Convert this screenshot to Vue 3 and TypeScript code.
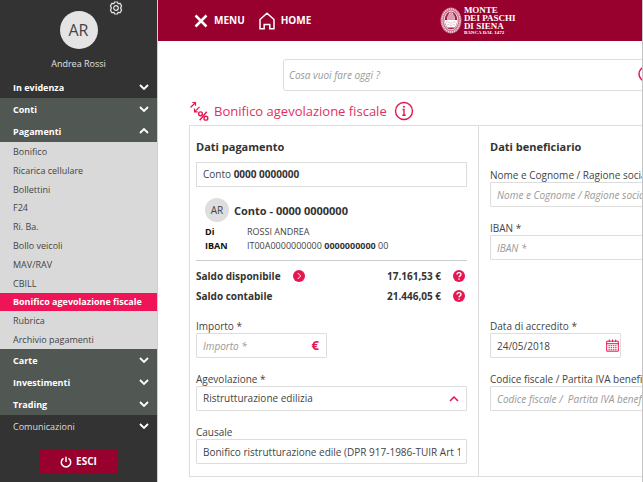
<script setup lang="ts">
import { ref } from 'vue'

interface MenuSection {
  label: string
  tone: 'dark' | 'grey'
  light?: boolean
  items?: string[]
}

const sections: MenuSection[] = [
  { label: 'In evidenza', tone: 'dark' },
  { label: 'Conti', tone: 'grey' },
  {
    label: 'Pagamenti',
    tone: 'grey',
    items: [
      'Bonifico',
      'Ricarica cellulare',
      'Bollettini',
      'F24',
      'Ri. Ba.',
      'Bollo veicoli',
      'MAV/RAV',
      'CBILL',
      'Bonifico agevolazione fiscale',
      'Rubrica',
      'Archivio pagamenti',
    ],
  },
  { label: 'Carte', tone: 'grey' },
  { label: 'Investimenti', tone: 'grey' },
  { label: 'Trading', tone: 'grey' },
  { label: 'Comunicazioni', tone: 'dark', light: true },
]

const openSection = ref('Pagamenti')
const activeItem = ref('Bonifico agevolazione fiscale')

const balances = [
  { label: 'Saldo disponibile', amount: '17.161,53 €', more: true },
  { label: 'Saldo contabile', amount: '21.446,05 €', more: false },
]

const search = ref('')
const amount = ref('')
const relief = ref('Ristrutturazione edilizia')
const reason = ref('Bonifico ristrutturazione edile (DPR 917-1986-TUIR Art 16-BIS)')
const payee = ref('')
const iban = ref('')
const creditDate = ref('24/05/2018')
const taxCode = ref('')

function toggle(label: string) {
  openSection.value = openSection.value === label ? '' : label
}
</script>

<template>
  <div class="page">
    <aside class="sidebar">
      <div class="profile">
        <button class="settings" type="button" aria-label="Impostazioni">
          <svg viewBox="0 0 14 14" width="14" height="14">
            <path d="M5.600 1h2.800l.7 1.700 2.100-.3 1.400 2.500L11.500 7l1.100 2.100-1.400 2.500-2.100-.3-.7 1.700H5.600l-.7-1.700-2.100.3-1.400-2.500L2.500 7 1.400 4.900l1.400-2.500 2.100.3z" />
            <circle cx="7" cy="7" r="2.300" />
          </svg>
        </button>
        <span class="avatar">AR</span>
        <span class="name">Andrea Rossi</span>
      </div>

      <nav class="menu">
        <div v-for="s in sections" :key="s.label">
          <button
            type="button"
            class="section"
            :class="[s.tone, { light: s.light }]"
            :aria-expanded="openSection === s.label"
            @click="toggle(s.label)"
          >
            <span>{{ s.label }}</span>
            <svg viewBox="0 0 10 6" width="10" height="6" class="chevron">
              <path :d="openSection === s.label ? 'M1 5l4-4 4 4' : 'M1 1l4 4 4-4'" />
            </svg>
          </button>
          <ul v-if="s.items && openSection === s.label" class="items">
            <li v-for="item in s.items" :key="item">
              <a href="#" :class="{ active: item === activeItem }" @click.prevent="activeItem = item">{{ item }}</a>
            </li>
          </ul>
        </div>
      </nav>

      <button class="logout" type="button">
        <svg viewBox="0 0 12 12" width="12" height="12">
          <path d="M3.500 2.300a4.700 4.700 0 1 0 5 0M6 .8v5.200" />
        </svg>
        <span>ESCI</span>
      </button>
    </aside>

    <div class="main">
      <header class="topbar">
        <button class="toplink" type="button">
          <svg viewBox="0 0 14 14" width="14" height="14" class="cross"><path d="M1.500 1.500l11 11M12.500 1.500l-11 11" /></svg>
          <span>MENU</span>
        </button>
        <a class="toplink" href="#">
          <svg viewBox="0 0 16 18" width="16" height="18" class="house">
            <path d="M1 7.500L8 1.200l7 6.300v9.300h-4.200v-4.300H5.200v4.300H1z" />
          </svg>
          <span>HOME</span>
        </a>
        <a class="brand" href="#">
          <svg viewBox="0 0 22 27" width="22" height="27">
            <ellipse cx="11" cy="13.500" rx="10.500" ry="13" fill="#c97590" />
            <ellipse cx="11" cy="13.500" rx="9" ry="11.500" fill="none" stroke="#fbeef2" stroke-width="1.400" stroke-dasharray="1 1" />
            <ellipse cx="11" cy="13.500" rx="6.800" ry="9.300" fill="#a51943" stroke="#fff" stroke-width=".8" />
            <path d="M11 4.700c-2.400 1-4 4-4 8h8c0-4-1.600-7-4-8z" fill="#f3d6df" />
            <path d="M11 5v7.500M9 7v5M13 7v5" stroke="#a51943" stroke-width=".6" />
            <path d="M4.800 13h12.400c0 3-1 5.500-2.700 7.500h-7C5.800 18.500 4.800 16 4.800 13z" fill="#fff" />
            <path d="M6 15.500q1.700-1.600 3.300 0t3.400 0 3.300 0M7 18q1.300-1.200 2.700 0t2.600 0 2.700 0" fill="none" stroke="#d48ba3" stroke-width=".5" />
          </svg>
          <span class="brand-text">
            <strong>MONTE</strong>
            <strong>DEI PASCHI</strong>
            <strong>DI SIENA</strong>
            <small>BANCA DAL 1472</small>
          </span>
        </a>
      </header>

      <div class="content">
        <div class="searchbox">
          <input v-model="search" type="search" aria-label="Cerca" placeholder="Cosa vuoi fare oggi ?" />
          <svg viewBox="0 0 18 18" width="18" height="18"><circle cx="8" cy="8" r="7" /><path d="M13 13l4 4" /></svg>
        </div>

        <div class="title">
          <svg viewBox="0 0 20 20" width="20" height="20" class="transfer">
            <path d="M1.500 6.500L6.500 1.500M3.300 1.500h3.200v3.200" />
            <path d="M10.500 5.800L5.500 10.800M8.700 10.800H5.500V7.600" />
            <g class="percent">
              <path d="M17.700 10.800l-7 8.400" />
              <circle cx="11.500" cy="12.800" r="1.900" />
              <circle cx="16.900" cy="17.200" r="1.900" />
            </g>
          </svg>
          <h1>Bonifico agevolazione fiscale</h1>
          <button type="button" class="info" aria-label="Informazioni">
            <svg viewBox="0 0 20 20" width="20" height="20">
              <circle cx="10" cy="10" r="8.500" />
              <path d="M8.500 8.500H10v5.500M8.300 14.200h3.400" />
              <circle cx="10" cy="5.800" r="1" class="dot" />
            </svg>
          </button>
        </div>

        <form class="card" @submit.prevent>
          <section class="panel">
            <h2>Dati pagamento</h2>
            <div class="account">Conto <b>0000 0000000</b></div>
            <div class="holder">
              <div class="holder-head">
                <span class="badge">AR</span>
                <h3>Conto - 0000 0000000</h3>
              </div>
              <dl>
                <dt>Di</dt>
                <dd>ROSSI ANDREA</dd>
                <dt>IBAN</dt>
                <dd>IT00A0000000000 <b>0000000000</b> 00</dd>
              </dl>
            </div>
            <div class="balances">
              <div v-for="b in balances" :key="b.label" class="balance">
                <span>{{ b.label }}</span>
                <button v-if="b.more" type="button" class="round" aria-label="Dettaglio">
                  <svg viewBox="0 0 12 12" width="12" height="12"><circle cx="6" cy="6" r="6" /><path d="M4.700 3l3 3-3 3" /></svg>
                </button>
                <span class="amount">{{ b.amount }}</span>
                <button type="button" class="round" aria-label="Aiuto">
                  <svg viewBox="0 0 12 12" width="12" height="12">
                    <circle cx="6" cy="6" r="6" />
                    <path d="M4 4.600c0-2.600 4-2.600 4 0C8 6 6 5.900 6 7.300M6 8.600v1.200" class="mark" />
                  </svg>
                </button>
              </div>
            </div>
            <div class="fields">
              <div class="field short">
                <label for="amount">Importo *</label>
                <div class="control">
                  <input id="amount" v-model="amount" type="text" placeholder="Importo *" />
                  <span class="adorn euro">€</span>
                </div>
              </div>
              <div class="field">
                <label for="relief">Agevolazione *</label>
                <div class="control">
                  <select id="relief" v-model="relief">
                    <option>Ristrutturazione edilizia</option>
                    <option>Risparmio energetico</option>
                  </select>
                  <svg viewBox="0 0 10 6" width="10" height="6" class="adorn caret"><path d="M1 5l4-4 4 4" /></svg>
                </div>
              </div>
              <div class="field">
                <label for="reason">Causale</label>
                <div class="control"><input id="reason" v-model="reason" type="text" /></div>
              </div>
            </div>
          </section>

          <section class="panel">
            <h2>Dati beneficiario</h2>
            <div class="fields">
              <div class="field">
                <label for="payee">Nome e Cognome / Ragione sociale *</label>
                <div class="control">
                  <input id="payee" v-model="payee" type="text" placeholder="Nome e Cognome / Ragione sociale *" />
                </div>
              </div>
              <div class="field">
                <label for="iban">IBAN *</label>
                <div class="control"><input id="iban" v-model="iban" type="text" placeholder="IBAN *" /></div>
              </div>
            </div>
            <div class="fields second">
              <div class="field short">
                <label for="date">Data di accredito *</label>
                <div class="control">
                  <input id="date" v-model="creditDate" type="text" />
                  <svg viewBox="0 0 13 13" width="13" height="13" class="adorn calendar">
                    <path d="M.7 2.200h11.600v10H.7zM.7 4.700h11.600M3.300.5v2.500M6.500.5v2.500M9.700.5v2.500" />
                    <path d="M2.500 6.700h8M2.500 8.700h8M2.500 10.700h8" stroke-dasharray="1.400 .8" />
                  </svg>
                </div>
              </div>
              <div class="field">
                <label for="tax">Codice fiscale / Partita IVA beneficiario</label>
                <div class="control">
                  <input id="tax" v-model="taxCode" type="text" placeholder="Codice fiscale /  Partita IVA beneficiario" />
                </div>
              </div>
            </div>
          </section>
        </form>
      </div>
    </div>
  </div>
</template>

<style>
body {
  background: #fff;
  overflow-x: hidden;
}
</style>

<style scoped>
* {
  box-sizing: border-box;
}

.page {
  display: flex;
  min-height: 100vh;
  overflow: hidden;
  border-right: 1px solid #c4c4c4;
  font-family: 'Open Sans', 'Noto Sans', sans-serif;
  font-size: 10px;
  line-height: 15px;
  color: #444;
}

button,
input,
select {
  font: inherit;
  color: inherit;
}

button {
  padding: 0;
  border: 0;
  background: none;
}

svg {
  display: block;
  flex: none;
  fill: none;
}

h1,
h2,
h3,
ul,
dl,
dd {
  margin: 0;
  padding: 0;
}

a {
  color: inherit;
  text-decoration: none;
}

/* Sidebar */
.sidebar {
  flex: none;
  width: 158px;
  padding-bottom: 9px;
  border-right: 1px solid #d0d0d0;
  background: #333;
  font-size: 9px;
}

.profile {
  position: relative;
  display: flex;
  flex-direction: column;
  align-items: center;
  gap: 7px;
  padding: 11px 0 5px;
}

.settings {
  position: absolute;
  top: 1px;
  right: 34px;
}

.settings svg {
  stroke: #e6e6e6;
  stroke-width: 1.2;
}

.avatar {
  display: grid;
  place-items: center;
  width: 38px;
  height: 38px;
  border-radius: 50%;
  background: #e4e4e4;
  color: #444;
  font-size: 16px;
}

.name {
  color: #e2e2e2;
}

.section {
  display: flex;
  align-items: center;
  justify-content: space-between;
  width: 100%;
  height: 22px;
  padding: 0 8px 0 13px;
  color: #fff;
  font-weight: 700;
}

.section.dark {
  background: #333;
}

.section.grey {
  background: #515753;
}

.section.light {
  color: #ddd;
  font-weight: 400;
}

.chevron {
  stroke: #fff;
  stroke-width: 1.8;
}

.items {
  display: grid;
  grid-auto-rows: 1fr;
  min-height: 207px;
  list-style: none;
  background: #d9d9d9;
}

.items a {
  display: flex;
  align-items: center;
  height: 100%;
  padding-left: 13px;
  white-space: nowrap;
}

.items a.active {
  background: #ef1458;
  color: #fff;
  font-weight: 700;
}

.logout {
  display: flex;
  align-items: center;
  justify-content: center;
  gap: 4px;
  width: 78px;
  height: 23px;
  margin: 13px auto 0;
  background: #98002e;
  color: #fff;
  font-size: 10px;
  font-weight: 700;
}

.logout svg {
  stroke: #fff;
  stroke-width: 1.5;
}

/* Top bar */
.main {
  flex: 1;
  min-width: 0;
}

.topbar {
  display: flex;
  align-items: center;
  height: 41px;
  padding-left: 36px;
  background: #98002e;
  color: #fff;
}

.toplink {
  display: flex;
  align-items: center;
  gap: 6px;
  margin-right: 14px;
  font-weight: 700;
}

.cross {
  stroke: #fff;
  stroke-width: 2.5;
}

.house {
  stroke: #fff;
  stroke-width: 1.5;
}

.brand {
  display: flex;
  align-items: center;
  gap: 2px;
  margin: 0 auto;
  padding-right: 12px;
}

.brand-text {
  display: flex;
  flex-direction: column;
  font-family: 'Liberation Serif', serif;
  font-size: 9px;
  line-height: 8px;
}

.brand-text small {
  font-size: 5px;
  font-weight: 700;
  line-height: 6px;
}

/* Content */
.content {
  padding: 18px 0 5px 31px;
}

.searchbox {
  display: flex;
  align-items: center;
  width: 400px;
  height: 32px;
  margin-left: 94px;
  border: 1px solid #ddd;
  border-radius: 3px;
}

.searchbox input {
  width: 354px;
  height: 30px;
  padding: 0 5px;
  border: 0;
  background: none;
  appearance: none;
}

.searchbox svg {
  stroke: #e5174f;
  stroke-width: 1.5;
}

.title {
  display: flex;
  align-items: center;
  gap: 5px;
  height: 34px;
  padding-top: 6px;
  color: #e0305f;
}

.title h1 {
  font-size: 13px;
  font-weight: 400;
  line-height: 18px;
}

.transfer {
  stroke: #e5174f;
  stroke-width: 1.2;
}

.percent {
  stroke-width: 1.4;
}

.info {
  margin-left: 2px;
}

.info svg {
  stroke: #e5174f;
  stroke-width: 1.4;
}

.info .dot {
  fill: #e5174f;
  stroke: none;
}

.card {
  display: grid;
  grid-template-columns: 288px 288px;
  width: 578px;
  border: 1px solid #ddd;
  background: #fff;
}

.panel {
  padding: 12px 11px 12px 6px;
}

.panel + .panel {
  padding-left: 11px;
  border-left: 1px solid #ddd;
}

h2 {
  color: #333;
  font-size: 11px;
  font-weight: 700;
  line-height: 17px;
}

.account {
  height: 25px;
  margin-top: 7px;
  padding: 4px 6px;
  border: 1px solid #ddd;
}

.account b,
dd b {
  color: #333;
}

.holder {
  padding: 11px 0 7px 9px;
}

.holder-head {
  display: flex;
  align-items: center;
  gap: 5px;
}

.badge {
  display: grid;
  place-items: center;
  width: 24px;
  height: 24px;
  border-radius: 50%;
  background: #dedede;
}

h3 {
  color: #333;
  font-size: 11px;
  font-weight: 700;
}

dl {
  display: grid;
  grid-template-columns: 42px 1fr;
  margin-top: 3px;
  font-size: 9px;
  line-height: 14px;
}

dt {
  color: #111;
  font-weight: 700;
}

.balances {
  padding-top: 5px;
  border-top: 1px solid #ccc;
}

.balance {
  display: flex;
  align-items: center;
  height: 20px;
  padding-right: 2px;
  color: #333;
  font-weight: 700;
}

.balance .round {
  margin-left: 12px;
}

.round circle {
  fill: #e5174f;
}

.round path {
  stroke: #fff;
}

.round .mark {
  stroke-width: 1.4;
}

.amount {
  margin-left: auto;
}

.fields {
  display: grid;
  gap: 15px;
  margin-top: 14px;
}

.fields.second {
  margin-top: 60px;
}

.field.short {
  width: 131px;
}

.field label {
  display: block;
  line-height: 13px;
  white-space: nowrap;
}

.control {
  position: relative;
}

.control input,
.control select {
  display: block;
  width: 100%;
  height: 25px;
  padding: 0 6px;
  border: 1px solid #ddd;
  border-radius: 1px;
  background: #fff;
  appearance: none;
}

input::placeholder {
  color: #999;
  font-style: italic;
  opacity: 1;
}

.adorn {
  position: absolute;
  right: 8px;
  top: 5px;
  color: #e5174f;
  stroke: #e5174f;
  stroke-width: 1.5;
  pointer-events: none;
}

.euro {
  font-size: 13px;
  font-weight: 700;
}

.caret {
  top: 10px;
}

.calendar {
  right: 2px;
  top: 6px;
  stroke-width: 1;
}
</style>
